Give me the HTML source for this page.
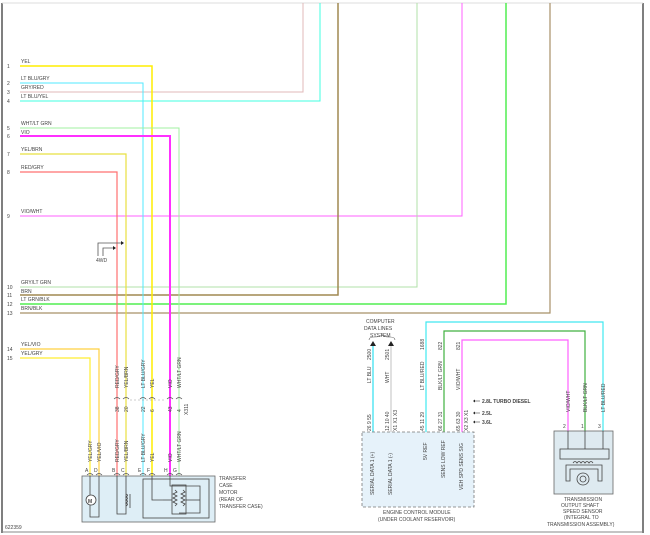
<!DOCTYPE html>
<html><head><style>
html,body{margin:0;padding:0;background:#fff;}
svg{display:block;font-family:"Liberation Sans",sans-serif;}
text{font-size:5px;fill:#444;}
</style></head><body>
<svg width="650" height="535" viewBox="0 0 650 535" xmlns="http://www.w3.org/2000/svg">
<rect x="0" y="0" width="650" height="535" fill="#fff"/>
<line x1="2" y1="3" x2="2" y2="533" stroke="#555" stroke-width="1.5"/>
<line x1="643" y1="3" x2="643" y2="533" stroke="#555" stroke-width="1.5"/>
<line x1="2" y1="3" x2="643" y2="3" stroke="#ddd" stroke-width="1"/>
<line x1="2" y1="532" x2="643" y2="532" stroke="#888" stroke-width="1"/>
<g fill="none">
<polyline points="20,92 303,92 303,3" stroke="#e0b8b8" stroke-width="1"/>
<polyline points="20,101 320,101 320,3" stroke="#40ffe0" stroke-width="1"/>
<polyline points="20,216 462,216 462,3" stroke="#ff60ff" stroke-width="1"/>
<polyline points="20,287 417,287 417,3" stroke="#b0e0a8" stroke-width="1"/>
<polyline points="20,295 338,295 338,3" stroke="#a08850" stroke-width="1.5"/>
<polyline points="20,304 506,304 506,3" stroke="#50ee50" stroke-width="1.5"/>
<polyline points="20,313 550,313 550,3" stroke="#a89068" stroke-width="1.2"/>
<polyline points="20,66 152,66 152,476" stroke="#ffee00" stroke-width="1.5"/>
<polyline points="20,83 143,83 143,476" stroke="#50e8ff" stroke-width="1"/>
<polyline points="20,128 179,128 179,476" stroke="#a0f0a0" stroke-width="1"/>
<polyline points="20,136 170,136 170,476" stroke="#ff30ff" stroke-width="2"/>
<polyline points="20,154 126,154 126,476" stroke="#e8e040" stroke-width="1.2"/>
<polyline points="20,172 117,172 117,476" stroke="#ff7070" stroke-width="1.2"/>
<polyline points="20,349 99,349 99,476" stroke="#ffd040" stroke-width="1.2"/>
<polyline points="20,358 90,358 90,476" stroke="#ffee30" stroke-width="1.2"/>
</g>
<g>
<text x="7" y="68">1</text><text x="21" y="63">YEL</text>
<text x="7" y="85">2</text><text x="21" y="80">LT BLU/GRY</text>
<text x="7" y="94">3</text><text x="21" y="89">GRY/RED</text>
<text x="7" y="103">4</text><text x="21" y="98">LT BLU/YEL</text>
<text x="7" y="130">5</text><text x="21" y="125">WHT/LT GRN</text>
<text x="7" y="138">6</text><text x="21" y="134">VIO</text>
<text x="7" y="156">7</text><text x="21" y="151">YEL/BRN</text>
<text x="7" y="174">8</text><text x="21" y="169">RED/GRY</text>
<text x="7" y="218">9</text><text x="21" y="213">VIO/WHT</text>
<text x="7" y="289">10</text><text x="21" y="284">GRY/LT GRN</text>
<text x="7" y="297">11</text><text x="21" y="293">BRN</text>
<text x="7" y="306">12</text><text x="21" y="301">LT GRN/BLK</text>
<text x="7" y="315">13</text><text x="21" y="310">BRN/BLK</text>
<text x="7" y="351">14</text><text x="21" y="346">YEL/VIO</text>
<text x="7" y="360">15</text><text x="21" y="355">YEL/GRY</text>
<text x="96" y="262">4WD</text>
<text x="5" y="529">622359</text>
</g>
<polyline points="98,256 98,243 123,243" fill="none" stroke="#555" stroke-width="0.8"/>
<polyline points="103,256 103,248 115,248" fill="none" stroke="#555" stroke-width="0.8"/>
<path d="M121,241 l3,2 l-3,2z M113,246 l3,2 l-3,2z" fill="#222"/>
<g font-size="5">
<text transform="translate(119,388) rotate(-90)">RED/GRY</text>
<text transform="translate(128,388) rotate(-90)">YEL/BRN</text>
<text transform="translate(145,388) rotate(-90)">LT BLU/GRY</text>
<text transform="translate(154,388) rotate(-90)">YEL</text>
<text transform="translate(172,388) rotate(-90)">VIO</text>
<text transform="translate(181,388) rotate(-90)">WHT/LT GRN</text>
<text transform="translate(119,412) rotate(-90)">38</text>
<text transform="translate(128,412) rotate(-90)">20</text>
<text transform="translate(145,412) rotate(-90)">22</text>
<text transform="translate(154,412) rotate(-90)">6</text>
<text transform="translate(172,412) rotate(-90)">43</text>
<text transform="translate(181,412) rotate(-90)">4</text>
<text transform="translate(188,415) rotate(-90)">X311</text>
<text transform="translate(92,462) rotate(-90)">YEL/GRY</text>
<text transform="translate(101,462) rotate(-90)">YEL/VIO</text>
<text transform="translate(119,462) rotate(-90)">RED/GRY</text>
<text transform="translate(128,462) rotate(-90)">YEL/BRN</text>
<text transform="translate(145,462) rotate(-90)">LT BLU/GRY</text>
<text transform="translate(154,462) rotate(-90)">YEL</text>
<text transform="translate(172,462) rotate(-90)">VIO</text>
<text transform="translate(181,462) rotate(-90)">WHT/LT GRN</text>
<text x="85" y="472">A</text><text x="94" y="472">D</text><text x="112" y="472">B</text><text x="121" y="472">C</text>
<text x="138" y="472">E</text><text x="147" y="472">F</text><text x="164" y="472">H</text><text x="173" y="472">G</text>
</g>
<g fill="none" stroke="#555" stroke-width="0.7">
<path d="M114,399 q3,-3 6,0 M123,399 q3,-3 6,0 M140,399 q3,-3 6,0 M149,399 q3,-3 6,0 M167,399 q3,-3 6,0 M176,399 q3,-3 6,0"/>
<path d="M87,475 q3,-3 6,0 M96,475 q3,-3 6,0 M114,475 q3,-3 6,0 M123,475 q3,-3 6,0 M140,475 q3,-3 6,0 M149,475 q3,-3 6,0 M167,475 q3,-3 6,0 M176,475 q3,-3 6,0"/>
</g>
<line x1="130" y1="400" x2="165" y2="400" stroke="#999" stroke-width="0.5" stroke-dasharray="2,2"/>
<rect x="82" y="476" width="133" height="46" fill="#deeef6" stroke="#666" stroke-width="0.8"/>
<g fill="none" stroke="#444" stroke-width="0.8">
<polyline points="90,476 90,517 99,517 99,476"/>
<circle cx="91" cy="500" r="5" fill="#fff"/>
<polyline points="117,476 117,514 126,514 126,476"/>
<path d="M126,494 q3,1 0,3 q3,1 0,3 q3,1 0,3 q3,1 0,3"/>
<line x1="130" y1="494" x2="130" y2="508"/>
<rect x="143" y="479" width="66" height="39"/>
<polyline points="152,476 152,500 163,500"/>
<polyline points="170,476 170,486 200,486 200,513 179,513"/>
<rect x="172" y="485" width="14" height="29"/>
<path d="M175,490 l2,2 l-4,2 l4,2 l-4,2 l4,2 l-4,2 l4,2 l-2,2 M183,490 l2,2 l-4,2 l4,2 l-4,2 l4,2 l-4,2 l4,2 l-2,2"/>
<line x1="163" y1="500" x2="172" y2="500"/><line x1="186" y1="500" x2="200" y2="500"/>
</g>
<text x="88" y="503" font-size="5" font-weight="bold" fill="#333">M</text>
<g>
<text x="219" y="480">TRANSFER</text><text x="219" y="487">CASE</text><text x="219" y="494">MOTOR</text>
<text x="219" y="501">(REAR OF</text><text x="219" y="508">TRANSFER CASE)</text>
</g>
<g fill="none">
<polyline points="426,432 426,322 603,322 603,431" stroke="#40e8f0" stroke-width="1.2"/>
<polyline points="444,432 444,331 585,331 585,431" stroke="#40b040" stroke-width="1.2"/>
<polyline points="462,432 462,340 568,340 568,431" stroke="#ff60ff" stroke-width="1.2"/>
<line x1="373" y1="345" x2="373" y2="432" stroke="#30e0f0" stroke-width="1.2"/>
<line x1="391" y1="345" x2="391" y2="432" stroke="#ccc" stroke-width="1.2"/>
</g>
<path d="M370,346 l3,-5 l3,5z M388,346 l3,-5 l3,5z" fill="#222"/>
<path d="M369,340 q0,-3 5,-3 q8,0 8,-3 q0,3 8,3 q5,0 5,3" fill="none" stroke="#555" stroke-width="0.6"/>
<text x="366" y="323">COMPUTER</text><text x="364" y="330">DATA LINES</text><text x="370" y="337">SYSTEM</text>
<rect x="362" y="432" width="112" height="75" fill="#e6f2fa" stroke="#777" stroke-width="0.8" stroke-dasharray="3,2"/>
<g>
<text transform="translate(371,383) rotate(-90)">LT BLU</text><text transform="translate(371,360) rotate(-90)">2500</text>
<text transform="translate(389,383) rotate(-90)">WHT</text><text transform="translate(389,360) rotate(-90)">2501</text>
<text transform="translate(424,390) rotate(-90)">LT BLU/RED</text><text transform="translate(424,350) rotate(-90)">1688</text>
<text transform="translate(442,390) rotate(-90)">BLK/LT GRN</text><text transform="translate(442,350) rotate(-90)">822</text>
<text transform="translate(460,390) rotate(-90)">VIO/WHT</text><text transform="translate(460,350) rotate(-90)">821</text>
<text transform="translate(371,431) rotate(-90)">26  9  55</text>
<text transform="translate(389,431) rotate(-90)">12  10  40</text>
<text transform="translate(397,431) rotate(-90)">X1 X1 X3</text>
<text transform="translate(424,431) rotate(-90)">45  11  29</text>
<text transform="translate(442,431) rotate(-90)">66  27  31</text>
<text transform="translate(460,431) rotate(-90)">65  63  30</text>
<text transform="translate(468,431) rotate(-90)">X2 X3 X1</text>
<text x="482" y="403" font-weight="bold">2.8L TURBO DIESEL</text><text x="482" y="415" font-weight="bold">2.5L</text><text x="482" y="424" font-weight="bold">3.6L</text>
<text transform="translate(374,495) rotate(-90)">SERIAL DATA 1 (+)</text>
<text transform="translate(392,495) rotate(-90)">SERIAL DATA 1 (-)</text>
<text transform="translate(427,460) rotate(-90)">5V REF</text>
<text transform="translate(445,478) rotate(-90)">SENS LOW REF</text>
<text transform="translate(463,490) rotate(-90)">VEH SPD SENS SIG</text>
<text x="383" y="514">ENGINE CONTROL MODULE</text>
<text x="378" y="521">(UNDER COOLANT RESERVOIR)</text>
<text transform="translate(570,412) rotate(-90)">VIO/WHT</text>
<text transform="translate(587,412) rotate(-90)">BLK/LT GRN</text>
<text transform="translate(605,412) rotate(-90)">LT BLU/RED</text>
<text x="563" y="428">2</text><text x="581" y="428">1</text><text x="598" y="428">3</text>
<text x="564" y="501">TRANSMISSION</text><text x="561" y="507">OUTPUT SHAFT</text><text x="563" y="513">SPEED SENSOR</text>
<text x="564" y="519">(INTEGRAL TO</text><text x="547" y="526">TRANSMISSION ASSEMBLY)</text>
</g>
<g stroke="#444" stroke-width="0.6" fill="none">
<line x1="474" y1="401" x2="480" y2="401"/><line x1="474" y1="413" x2="480" y2="413"/><line x1="474" y1="422" x2="480" y2="422"/>
</g>
<path d="M473,401 l2,-1.5 v3z M473,413 l2,-1.5 v3z M473,422 l2,-1.5 v3z" fill="#222"/>
<rect x="554" y="431" width="59" height="63" fill="#deeaf0" stroke="#666" stroke-width="0.8"/>
<g fill="none" stroke="#444" stroke-width="0.8">
<line x1="568" y1="431" x2="568" y2="449"/><line x1="585" y1="431" x2="585" y2="449"/><line x1="603" y1="431" x2="603" y2="449"/>
<rect x="560" y="449" width="49" height="10"/>
<path d="M566,465 h36 v16 h-4 v-12 h-28 v12 h-4z"/>
<circle cx="583" cy="479" r="6"/><circle cx="583" cy="479" r="3"/>
<path d="M573,463 q2,-3 4,0 q2,-3 4,0 q2,-3 4,0 q2,-3 4,0 q2,-3 4,0"/>
</g>
</svg>
</body></html>
